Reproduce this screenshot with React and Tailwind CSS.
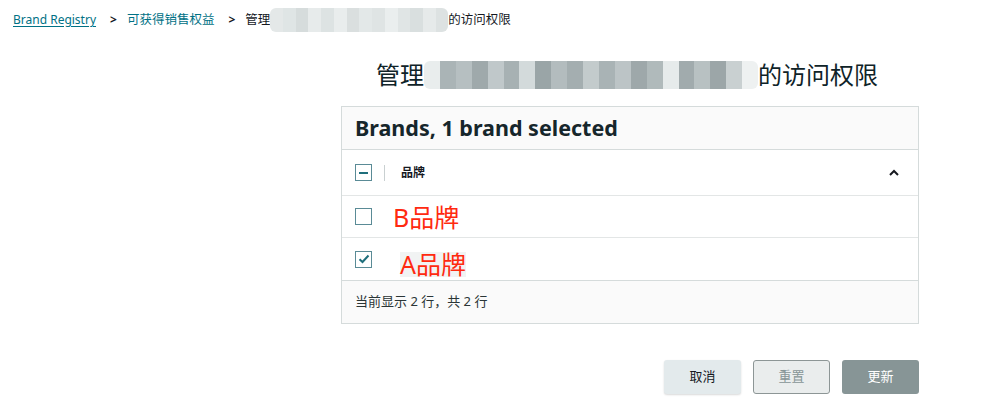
import React from "react";

const font = { fontFamily: '"Noto Sans", "Noto Sans CJK SC", sans-serif' };

function Blur({ w, h, cells }) {
    // pixelated mask, like the screenshot's redaction
    return (
        <span className="inline-flex overflow-hidden rounded-md align-middle" style={{ width: w, height: h }}>
            {cells.map((c, i) => (
                <span key={i} className="flex-1 h-full" style={{ background: c }} />
            ))}
        </span>
    );
}

const crumbCells = ["#e4e8e8", "#dfe5e5", "#d6dcdc", "#e7ebeb", "#dde3e3", "#e9eded", "#dadfdf", "#e3e8e8", "#dfe4e4", "#eaeeee", "#e0e5e5", "#d9dfdf", "#e6eaea", "#dde2e2"];
const titleCells = ["#e9eded", "#aab4b6", "#b6bfc1", "#9fa9ab", "#c0c8ca", "#a7b1b3", "#d3dadb", "#9aa5a7", "#b3bcbe", "#a4aeb0", "#c3cbcc", "#a9b3b5", "#bcc4c6", "#9ea8aa", "#b0babb", "#e6ebeb", "#a1abad", "#b8c1c2", "#9ca6a8", "#c9d0d1", "#eef1f1"];

function Checkbox({ state }) {
    return (
        <span className="w-[17px] h-[17px] border border-[#5a8b96] bg-white flex items-center justify-center">
            {state === "mixed" && <span className="w-[9px] h-[2px] bg-[#1f6f7c]" />}
            {state === "checked" && (
                <svg width="12" height="10" viewBox="0 0 12 10">
                    <path d="M1.5 5.2 L4.5 8 L10.5 1.5" fill="none" stroke="#1f6f7c" strokeWidth="2" />
                </svg>
            )}
        </span>
    );
}

export default function App() {
    return (
        <div className="w-[981px] h-[413px] bg-white text-[#16191f] relative" style={font}>
            <div className="flex items-center h-[40px] pl-[13px] text-[12.5px] leading-none">
                <a className="text-[#007185] underline underline-offset-2 text-[12px]">Brand Registry</a>
                <span className="ml-[14px] mr-[10px] text-[#16191f] font-bold text-[12px]">&gt;</span>
                <a className="text-[#007185]">可获得销售权益</a>
                <span className="ml-[14px] mr-[10px] text-[#16191f] font-bold text-[12px]">&gt;</span>
                <span>管理</span>
                <Blur w={178} h={24} cells={crumbCells} />
                <span>的访问权限</span>
            </div>

            <div className="ml-[341px] w-[578px]">
                <h1 className="flex items-center justify-center h-[66px] pt-[4px] pr-[6px] text-[24px] text-[#0f2328]">
                    <span>管理</span>
                    <Blur w={334} h={28} cells={titleCells} />
                    <span>的访问权限</span>
                </h1>

                <div className="border border-[#d5dbdb]">
                    <div className="h-[43px] bg-[#fafafa] border-b border-[#d5dbdb] flex items-center px-[13px]">
                        <span className="text-[21.5px] font-bold text-[#16262b]">Brands, 1 brand selected</span>
                    </div>
                    <div className="h-[46px] border-b border-[#e3e6e6] flex items-center px-[13px]">
                        <Checkbox state="mixed" />
                        <span className="w-px h-[16px] bg-[#c9d0d1] ml-[12px]" />
                        <span className="ml-[16px] text-[12px] font-bold">品牌</span>
                        <svg className="ml-auto mr-[5px]" width="12" height="8" viewBox="0 0 12 8">
                            <path d="M2 6 L6 2 L10 6" fill="none" stroke="#16191f" strokeWidth="2" />
                        </svg>
                    </div>
                    <div className="h-[42px] border-b border-[#e3e6e6] flex items-center px-[13px]">
                        <Checkbox />
                        <span className="ml-[21px] mt-[2px] text-[25px] text-[#ff2a10] leading-none">B品牌</span>
                    </div>
                    <div className="h-[43px] border-b border-[#d5dbdb] flex items-center px-[13px]">
                        <Checkbox state="checked" />
                        <span className="ml-[28px] mt-[10px] text-[25px] text-[#ff2a10] leading-none bg-[#f1f3f3]">A品牌</span>
                    </div>
                    <div className="h-[42px] bg-[#fafafa] flex items-center px-[13px] text-[13px] text-[#2a3536]">
                        当前显示 2 行，共 2 行
                    </div>
                </div>

                <div className="flex justify-end gap-[12px] mt-[36px]">
                    <button className="w-[77px] h-[34px] rounded-[3px] bg-[#e3eaec] text-[13px] text-[#16191f] shadow-[0_1px_2px_rgba(0,0,0,0.15)]">取消</button>
                    <button className="w-[77px] h-[34px] rounded-[3px] bg-[#eaeded] border border-[#8d9696] text-[13px] text-[#879596]">重置</button>
                    <button className="w-[77px] h-[34px] rounded-[3px] bg-[#879596] text-[13px] text-white">更新</button>
                </div>
            </div>
        </div>
    );
}
